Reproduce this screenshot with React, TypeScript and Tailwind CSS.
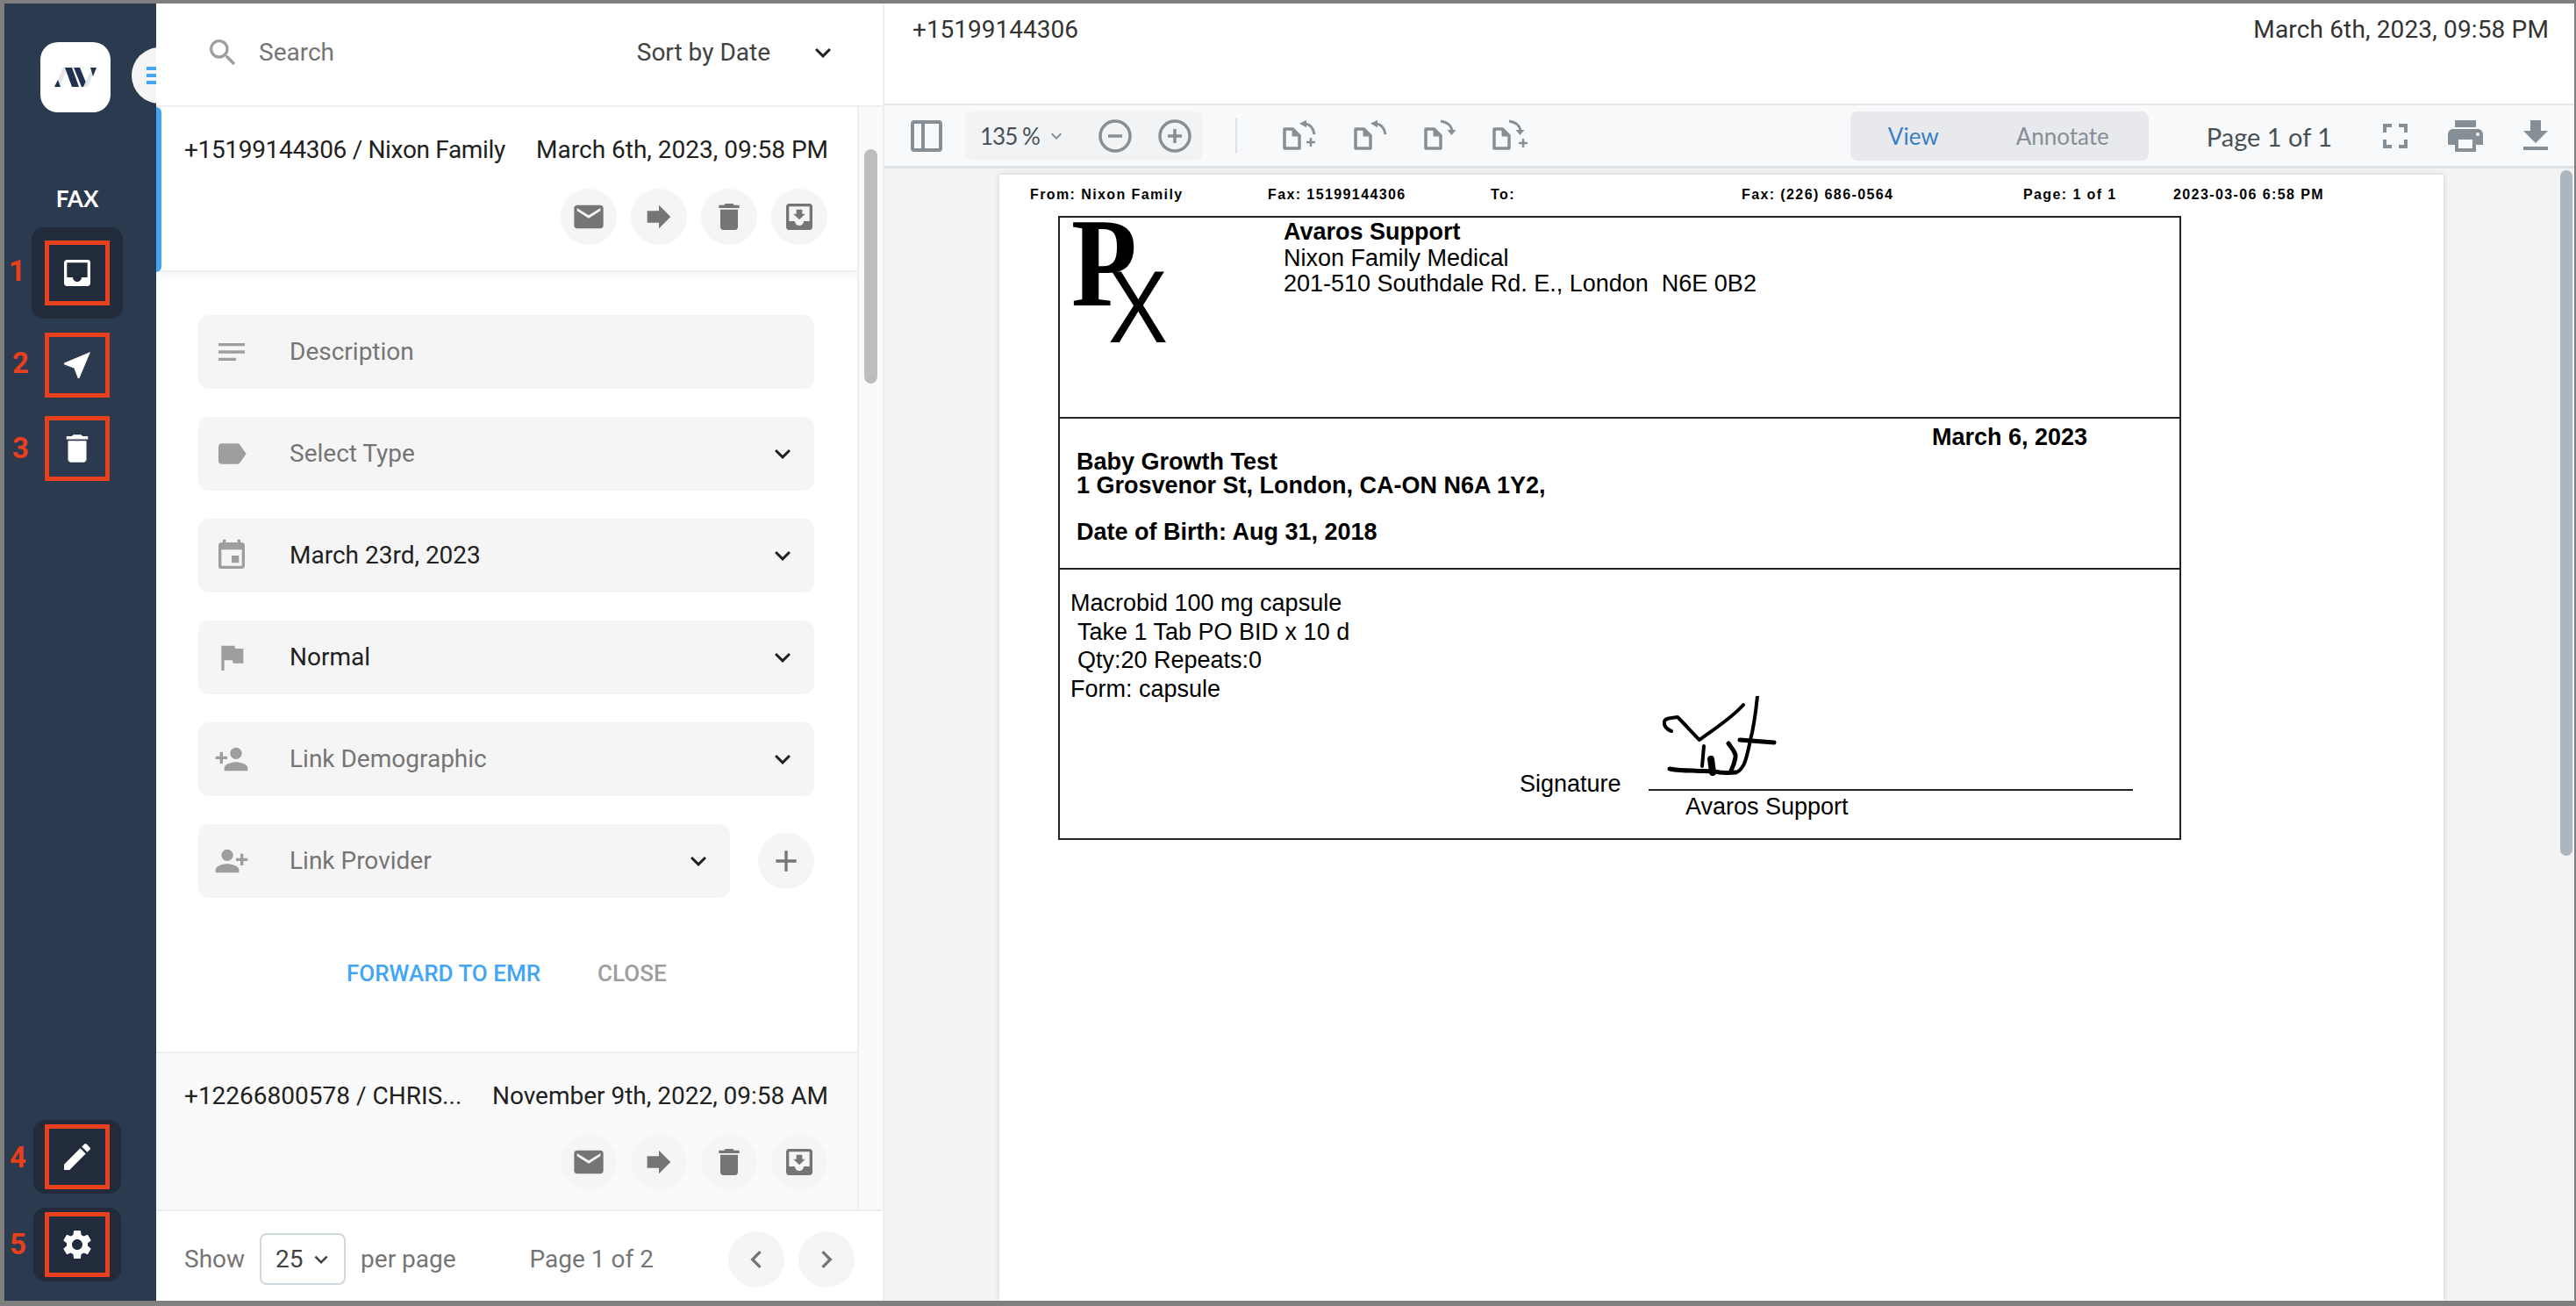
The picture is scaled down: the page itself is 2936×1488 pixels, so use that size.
import {
  MdAdd,
  MdChevronLeft,
  MdChevronRight,
  MdDelete,
  MdEdit,
  MdEvent,
  MdExpandMore,
  MdFileDownload,
  MdFlag,
  MdForward,
  MdFullscreen,
  MdInbox,
  MdKeyboardArrowDown,
  MdLabel,
  MdMail,
  MdMoveToInbox,
  MdNearMe,
  MdNotes,
  MdPersonAdd,
  MdPrint,
  MdSearch,
  MdSettings,
} from "react-icons/md"
import type { ReactNode } from "react"

function NavItem({ icon, label, active, heightClass, numberClass, widthClass }: { icon: ReactNode; label: string; active?: boolean; heightClass: string; numberClass: string; widthClass: string }) {
  return (
    <div className={`relative flex items-center justify-center text-white rounded-[14px] ${heightClass} ${widthClass} ${active ? "bg-[#212b3c]" : ""}`}>
      {icon}
      <span className="absolute left-1/2 top-1/2 -translate-x-1/2 -translate-y-1/2 w-[74px] h-[74px] border-[5px] border-[#e8401c]" />
      <span className={`absolute text-[#e8401c] text-[33px] font-bold leading-none ${numberClass}`}>{label}</span>
    </div>
  )
}

function Sidebar() {
  return (
    <aside className="relative w-[173px] shrink-0 bg-[#2b3a4e] flex flex-col items-center overflow-hidden pr-[7px] pb-[22px]">
      <div className="mt-[44px] mr-[4px] w-[80px] h-[80px] rounded-[20px] bg-white flex items-center justify-center">
        <svg width="48" height="22" viewBox="0 0 48 22">
          <polygon points="0,22 10,0 15,0 6,22" fill="#e3e7eb" />
          <polygon points="0,22 7,22 4,14" fill="#1f3350" />
          <polygon points="12,0 20,0 28,22 20,22" fill="#1f3350" />
          <polygon points="22,0 29,0 38,22 31,22" fill="#1f3350" />
          <polygon points="33,22 38,22 48,0 43,0" fill="#e3e7eb" />
          <polygon points="41,0 48,0 44,10" fill="#1f3350" />
        </svg>
      </div>
      <span className="absolute left-[145px] top-[50px] w-[64px] h-[64px] rounded-full bg-[#f5f5f5] flex flex-col justify-center gap-[4px] pl-[17px]">
        <span className="h-[4px] w-[12px] bg-[#42a5f5]" />
        <span className="h-[4px] w-[12px] bg-[#42a5f5]" />
        <span className="h-[4px] w-[12px] bg-[#42a5f5]" />
      </span>
      <div className="mt-[82px] h-[32px] text-white text-[26px] font-bold leading-[32px] font-[Lato,sans-serif]">FAX</div>
      <div className="mt-[17px] flex flex-col items-center">
        <NavItem active icon={<MdInbox size={40} />} label="1" heightClass="h-[104px]" widthClass="w-[104px]" numberClass="left-[-26px] top-[33px]" />
        <div className="h-[5px]" />
        <NavItem icon={<MdNearMe size={40} />} label="2" heightClass="h-[95px]" widthClass="w-[104px]" numberClass="left-[-22px] top-[29px]" />
        <NavItem icon={<MdDelete size={42} />} label="3" heightClass="h-[95px]" widthClass="w-[104px]" numberClass="left-[-22px] top-[31px]" />
      </div>
      <div className="mt-auto flex flex-col items-center gap-[16px]">
        <NavItem active icon={<MdEdit size={40} />} label="4" heightClass="h-[84px]" widthClass="w-[100px]" numberClass="left-[-27px] top-[26px]" />
        <NavItem active icon={<MdSettings size={40} />} label="5" heightClass="h-[84px]" widthClass="w-[100px]" numberClass="left-[-27px] top-[25px]" />
      </div>
    </aside>
  )
}

function RoundButton({ children, className = "" }: { children: ReactNode; className?: string }) {
  return <div className={`w-[64px] h-[64px] rounded-full bg-[#f5f5f5] flex items-center justify-center text-[#757575] ${className}`}>{children}</div>
}

function ItemActions() {
  return (
    <div className="flex justify-end gap-[16px]">
      <RoundButton><MdMail size={40} /></RoundButton>
      <RoundButton><MdForward size={40} /></RoundButton>
      <RoundButton><MdDelete size={40} /></RoundButton>
      <RoundButton><MdMoveToInbox size={40} /></RoundButton>
    </div>
  )
}

function Field({ icon, text, filled, chevron = true, className = "w-[702px]" }: { icon: ReactNode; text: string; filled?: boolean; chevron?: boolean; className?: string }) {
  return (
    <div className={`h-[84px] rounded-[12px] bg-[#f5f5f5] flex items-center ${className}`}>
      <span className="w-[76px] flex justify-center text-[#9e9e9e]">{icon}</span>
      <span className={`ml-[28px] flex-1 text-[28px] ${filled ? "text-[#212121]" : "text-[#757575]"}`}>{text}</span>
      {chevron && <MdKeyboardArrowDown size={36} className="mr-[18px] text-[#212121]" />}
    </div>
  )
}

function FaxList() {
  return (
    <section className="w-[830px] shrink-0 flex flex-col border-r-[2px] border-[#eeeeee] bg-white">
      <header className="h-[116px] shrink-0 flex items-center pl-[56px] pb-[4px] pr-[50px] text-[28px]">
        <MdSearch size={40} className="text-[#9e9e9e]" />
        <span className="ml-[21px] flex-1 text-[#757575]">Search</span>
        <span className="text-[#424242]">Sort by Date</span>
        <MdExpandMore size={36} className="ml-[42px] text-[#212121]" />
      </header>
      <div className="relative flex-1 flex border-t-[2px] border-[#eeeeee] min-h-0">
        <div className="relative w-[799px] shrink-0 flex flex-col">
          <span className="absolute left-0 top-0 w-[6px] h-[188px] rounded-r-[6px] bg-[#42a5f5]" />
          <div className="h-[188px] shrink-0 border-b-[2px] border-[#eeeeee] pt-[31px] pl-[32px] pr-[33px] shadow-[0_6px_10px_rgba(0,0,0,0.03)]">
            <div className="flex justify-between text-[28px] leading-[36px] text-[#212121]">
              <span className="tracking-[-0.33px]">+15199144306 / Nixon Family</span>
              <span>March 6th, 2023, 09:58 PM</span>
            </div>
            <div className="mt-[26px] pr-[1px]"><ItemActions /></div>
          </div>
          <div className="pt-[49px] pl-[48px] flex flex-col gap-[32px]">
            <Field icon={<MdNotes size={40} />} text="Description" chevron={false} />
            <Field icon={<MdLabel size={40} />} text="Select Type" />
            <Field icon={<MdEvent size={40} />} text="March 23rd, 2023" filled />
            <Field icon={<MdFlag size={40} />} text="Normal" filled />
            <Field icon={<MdPersonAdd size={40} />} text="Link Demographic" />
            <div className="flex items-center gap-[32px]">
              <Field icon={<MdPersonAdd size={40} className="-scale-x-100" />} text="Link Provider" className="w-[606px]" />
              <RoundButton><MdAdd size={40} /></RoundButton>
            </div>
          </div>
          <div className="mt-[68px] pl-[217px] flex gap-[65px] text-[26px] font-medium leading-[36px]">
            <span className="text-[#42a5f5]">FORWARD TO EMR</span>
            <span className="text-[#9e9e9e]">CLOSE</span>
          </div>
          <div className="mt-[71px] flex-1 bg-[#fafafa] border-t-[2px] border-[#eeeeee] pt-[31px] pl-[32px] pr-[33px]">
            <div className="flex justify-between text-[28px] leading-[36px] text-[#212121]">
              <span>+12266800578 / CHRIS...</span>
              <span>November 9th, 2022, 09:58 AM</span>
            </div>
            <div className="mt-[25px] pr-[1px]"><ItemActions /></div>
          </div>
        </div>
        <div className="relative flex-1 border-l-[2px] border-[#eeeeee] bg-[#fafafa]">
          <span className="absolute left-[6px] top-[48px] w-[15px] h-[267px] rounded-full bg-[#bdbdbd]" />
        </div>
      </div>
      <footer className="h-[104px] shrink-0 border-t-[2px] border-[#eeeeee] flex items-center pl-[32px] pr-[32px] pt-[7px] text-[28px] text-[#757575]">
        <span>Show</span>
        <span className="ml-[17px] w-[98px] h-[59px] rounded-[8px] border-[2px] border-[#cfd8dc] flex items-center pl-[16px] text-[#424242]">
          25
          <MdKeyboardArrowDown size={30} className="ml-[5px]" />
        </span>
        <span className="ml-[17px]">per page</span>
        <span className="ml-[84px] flex-1">Page 1 of 2</span>
        <RoundButton><MdChevronLeft size={40} /></RoundButton>
        <RoundButton className="ml-[16px]"><MdChevronRight size={40} /></RoundButton>
      </footer>
    </section>
  )
}

function PageIcon({ dir, plus }: { dir: "ccw" | "cw"; plus?: boolean }) {
  return (
    <svg width="42" height="38" viewBox="0 0 42 38" fill="none" stroke="#868e96" strokeWidth="3.5" strokeLinejoin="round">
      <path d="M2 11h9.5l7.5 7.5v14.5h-17z" />
      <path d="M11 11v8h8z" fill="#868e96" strokeWidth="1" />
      {dir === "ccw" ? (
        <>
          <path d="M36 17C35 10 31 5.5 25 4.7" strokeWidth="3" />
          <path d="M19 4.7L27 0.7V9.3z" fill="#868e96" stroke="none" />
        </>
      ) : (
        <>
          <path d="M19 2C26 3 31 6 32 13" strokeWidth="3" />
          <path d="M26.5 12H36.5L31.5 18z" fill="#868e96" stroke="none" />
        </>
      )}
      {plus && <path d={dir === "ccw" ? "M32 21v10M27 26h10" : "M35 22v10M30 27h10"} strokeWidth="2.5" />}
    </svg>
  )
}

function Toolbar() {
  return (
    <div className="h-[74px] shrink-0 border-t-[2px] border-b-[3px] border-t-[#e6e6e6] border-b-[#dee2e6] bg-[#f8f9fa] flex items-center pl-[30px] pr-[20px] font-[Lato,sans-serif]">
      <svg width="36" height="36" viewBox="0 0 36 36" fill="none" stroke="#868e96" strokeWidth="4">
        <rect x="2" y="2" width="32" height="32" rx="2" />
        <path d="M14 2v32" />
      </svg>
      <div className="ml-[26px] w-[271px] h-[56px] rounded-[8px] bg-[#f1f3f5] flex items-center pl-[17px] text-[#485056]">
        <span className="text-[26px] tracking-[-1px] pt-[2px]">135 %</span>
        <MdKeyboardArrowDown size={24} className="ml-[7px] text-[#868e96]" />
        <svg className="ml-[36px]" width="38" height="38" viewBox="0 0 38 38" fill="none" stroke="#868e96" strokeWidth="3.5">
          <circle cx="19" cy="19" r="17" />
          <path d="M11 19h16" />
        </svg>
        <svg className="ml-[30px]" width="38" height="38" viewBox="0 0 38 38" fill="none" stroke="#868e96" strokeWidth="3.5">
          <circle cx="19" cy="19" r="17" />
          <path d="M11 19h16M19 11v16" />
        </svg>
      </div>
      <span className="ml-[37px] w-[2px] h-[40px] bg-[#dee2e6]" />
      <div className="ml-[52px] flex">
        <PageIcon dir="ccw" plus />
        <span className="w-[39px]" />
        <PageIcon dir="ccw" />
        <span className="w-[38px]" />
        <PageIcon dir="cw" />
        <span className="w-[36px]" />
        <PageIcon dir="cw" plus />
      </div>
      <div className="ml-auto w-[340px] h-[56px] rounded-[8px] bg-[#e7e9ec] flex items-center text-[26px] pt-[2px]">
        <span className="ml-[43px] text-[#3b7fc4]">View</span>
        <span className="ml-[88px] text-[#868e96]">Annotate</span>
      </div>
      <span className="ml-[66px] text-[29px] text-[#485056] pt-[2px]">Page 1 of 1</span>
      <MdFullscreen size={48} className="ml-[48px] text-[#868e96]" />
      <MdPrint size={48} className="ml-[32px] text-[#868e96]" />
      <MdFileDownload size={48} className="ml-[32px] text-[#868e96]" />
    </div>
  )
}

function Signature() {
  return (
    <svg width="130" height="92" viewBox="0 0 130 92" fill="none" stroke="#000" strokeWidth="4" strokeLinecap="round" strokeLinejoin="round">
      <path d="M10 40C4 38 1 33 2 29C3 25 10 25 17 24C26 33 34 42 42 50C55 40 78 26 92 10" />
      <path d="M108 0C106 20 104 35 100 50C97 65 95 74 92 79C89 84 86 87 83 87" />
      <path d="M88 50L127 53" strokeWidth="5" />
      <path d="M8 83C18 85 28 85 35 85C45 86 55 85 65 87C72 88 78 87 83 87" strokeWidth="5" />
      <path d="M47 57L45 80" />
      <path d="M55 72L57 87" strokeWidth="8" />
      <path d="M75 54C79 60 84 65 83 70C82 76 80 81 78 85" strokeWidth="5" />
    </svg>
  )
}

function FaxPage() {
  return (
    <div className="w-[1646px] min-h-full bg-white shadow-[0_0_6px_rgba(0,0,0,0.15)] text-black font-['Liberation_Sans',sans-serif] pt-[13px] pb-[40px]">
      <div className="flex pl-[35px] text-[16px] leading-[20px] font-bold tracking-[1.4px]">
        <span className="w-[271px]">From: Nixon Family</span>
        <span className="w-[254px]">Fax: 15199144306</span>
        <span className="w-[286px]">To:</span>
        <span className="w-[321px]">Fax: (226) 686-0564</span>
        <span className="w-[171px]">Page: 1 of 1</span>
        <span>2023-03-06 6:58 PM</span>
      </div>
      <div className="mt-[14px] ml-[67px] w-[1280px] border-[2px] border-[#222] text-[27px]">
        <div className="h-[229px] flex border-b-[2px] border-[#222]">
          <div className="relative w-[255px] shrink-0">
            <span className="absolute left-[13px] top-[-20px] text-[144px] leading-none font-bold font-['Liberation_Serif',serif] scale-x-[0.85] origin-left">P</span>
            <span className="absolute left-[55px] top-[44px] text-[116px] leading-none scale-x-[0.88] origin-left">X</span>
          </div>
          <div className="pt-[2px] leading-[29.5px] whitespace-pre">
            <div className="font-bold">Avaros Support</div>
            <div>Nixon Family Medical</div>
            <div>201-510 Southdale Rd. E., London  N6E 0B2</div>
          </div>
        </div>
        <div className="h-[172px] border-b-[2px] border-[#222] font-bold pl-[19px] pt-[8px] leading-[27.5px]">
          <div className="text-right pr-[105px]">March 6, 2023</div>
          <div>Baby Growth Test</div>
          <div>1 Grosvenor St, London, CA-ON N6A 1Y2,</div>
          <div className="mt-[25px]">Date of Birth: Aug 31, 2018</div>
        </div>
        <div className="h-[306px] pl-[12px] pt-[22px] leading-[32.5px]">
          <div>Macrobid 100 mg capsule</div>
          <div className="pl-[8px]">Take 1 Tab PO BID x 10 d</div>
          <div className="pl-[8px]">Qty:20 Repeats:0</div>
          <div>Form: capsule</div>
          <div className="mt-[-8px] ml-[512px] flex items-start">
            <span className="mt-[84px] w-[147px]">Signature</span>
            <div className="w-[552px]">
              <div className="h-[108px] border-b-[2px] border-[#222] pl-[16px]"><Signature /></div>
              <div className="pl-[42px] leading-[36px]">Avaros Support</div>
            </div>
          </div>
        </div>
      </div>
    </div>
  )
}

export default function App() {
  return (
    <div className="w-[2936px] h-[1488px] bg-[#7f7f7f] pt-[4px] pl-[5px] pr-[2px] pb-[6px] flex overflow-hidden font-[Roboto,sans-serif]">
      <Sidebar />
      <FaxList />
      <main className="flex-1 min-w-0 flex flex-col bg-white">
        <div className="h-[114px] shrink-0 flex justify-between pl-[32px] pr-[29px] pt-[12px] text-[28px] leading-[36px] text-[#333333]">
          <span>+15199144306</span>
          <span className="tracking-[0.15px]">March 6th, 2023, 09:58 PM</span>
        </div>
        <Toolbar />
        <div className="relative flex-1 min-h-0 overflow-hidden bg-[#f1f3f5] pt-[7px] pl-[131px]">
          <FaxPage />
          <span className="absolute right-[2px] top-[2px] w-[14px] h-[781px] rounded-full bg-[#adb5bd]" />
        </div>
      </main>
    </div>
  )
}
